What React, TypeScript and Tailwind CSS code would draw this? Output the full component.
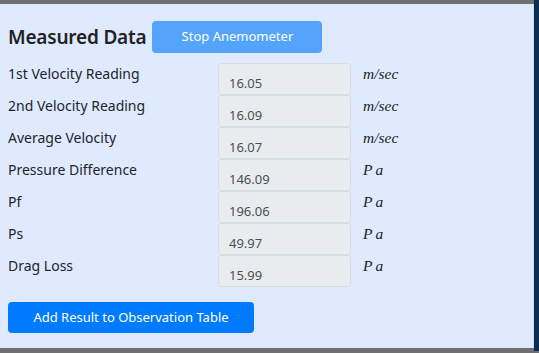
const ROWS = [
  { label: "1st Velocity Reading", value: "16.05", unit: "m/sec" },
  { label: "2nd Velocity Reading", value: "16.09", unit: "m/sec" },
  { label: "Average Velocity", value: "16.07", unit: "m/sec" },
  { label: "Pressure Difference", value: "146.09", unit: "Pa" },
  { label: "Pf", value: "196.06", unit: "Pa" },
  { label: "Ps", value: "49.97", unit: "Pa" },
  { label: "Drag Loss", value: "15.99", unit: "Pa" },
];

function Unit({ unit }: { unit: string }) {
  if (unit === "Pa") {
    return <span className="italic tracking-[3px]">Pa</span>;
  }
  return <span className="italic">m/sec</span>;
}

export default function App() {
  return (
    <div className="w-[539px] h-[353px] bg-[#707070] pt-[4px] pb-[5px] flex overflow-hidden">
      <div className="flex-1 bg-[#e0eaff] border-r border-[#c9d7f0] pl-[8px] pt-[17px] font-['Noto_Sans',sans-serif] text-[#212529]">
        <div className="flex items-center gap-[6px] h-[32px]">
          <h2 className="text-[19px] font-semibold leading-none text-[#222] tracking-[-0.2px]">Measured Data</h2>
          <button className="w-[170px] h-[32px] rounded-[4px] bg-[#55a4fb] text-white text-[13px]">
            Stop Anemometer
          </button>
        </div>

        <div className="mt-[10px] flex flex-col">
          {ROWS.map((r) => (
            <div key={r.label} className="flex h-[32px]">
              <div className="w-[210px] text-[14px] leading-[20px] pt-[1px]">{r.label}</div>
              <div className="w-[133px] h-[32px] bg-[#e9ecef] border border-[#d8dde3] rounded-[3px] pl-[10px] pt-[9px] text-[13px] leading-[20px] text-[#495057]">
                {r.value}
              </div>
              <div className="pl-[12px] pt-[1px] text-[15.5px] leading-[20px] font-['Liberation_Serif',serif] text-[#222]">
                <Unit unit={r.unit} />
              </div>
            </div>
          ))}
        </div>

        <button className="mt-[15px] w-[246px] h-[31px] rounded-[4px] bg-[#007bff] text-white text-[13px]">
          Add Result to Observation Table
        </button>
      </div>
      <div className="w-[5px] bg-[#0b2b52] -mt-[4px] -mb-[3px]" />
    </div>
  );
}
